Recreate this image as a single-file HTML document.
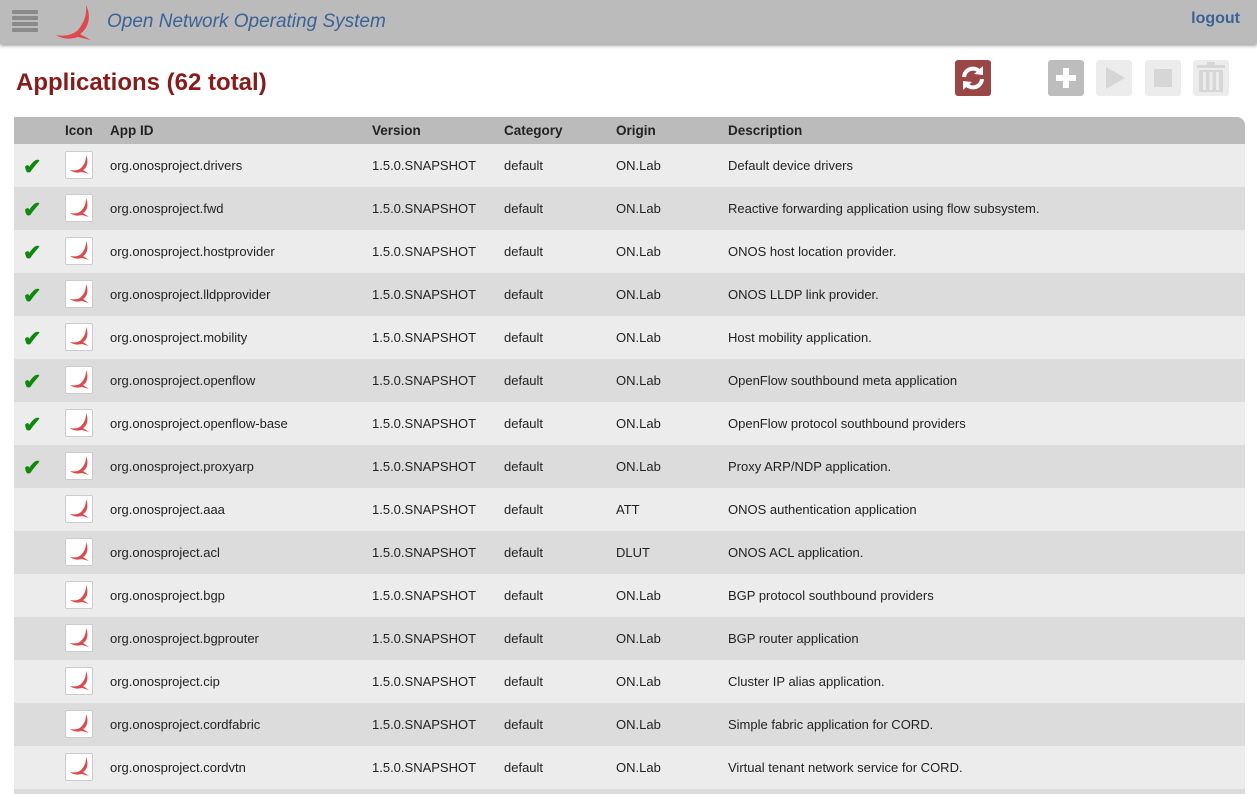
<!DOCTYPE html>
<html style="overflow:hidden;height:794px"><head><meta charset="utf-8"><style>
*{margin:0;padding:0;box-sizing:border-box}
body{width:1257px;height:794px;overflow:hidden;background:#fff;font-family:"Liberation Sans",Arial,sans-serif;position:relative}
.mast{position:absolute;left:0;top:0;width:1257px;height:44px;background:#bbb;box-shadow:0 2px 3px rgba(0,0,0,.35)}
.mast .title{position:absolute;left:107px;top:11px;font-size:19px;font-style:italic;color:#3c6296}
.mast .logout{position:absolute;right:17px;top:10px;font-size:16px;font-weight:bold;color:#3c6296}
.burger{position:absolute;left:12px;top:10px;width:26px}
.burger div{height:4px;background:#8a8a8a;margin-bottom:2px;border-radius:1px}
h1{position:absolute;left:16px;top:69px;font-size:24px;color:#8b1a1a;font-weight:bold}
.btn{position:absolute;top:60px;width:36px;height:36px;border-radius:3px}
.tbl{position:absolute;left:14px;top:117px;width:1231px;height:677px;overflow:hidden}
.hdr{height:27px;background:#bbb;border-radius:0 8px 0 0;position:relative;font-size:13.5px;font-weight:bold;color:#222}
.hdr span,.row span{position:absolute;top:6px}
.row{height:43px;position:relative;font-size:13px;color:#222}
.row span{top:14px}
.row:nth-child(odd){background:#ececec}
.row:nth-child(even){background:#dcdcdc}
.chk{position:absolute;left:9px;top:10px;color:#0b8a0b;font-size:22px;font-weight:bold}
.ic{position:absolute;left:51px;top:7px;width:28px;height:28px;background:#fff;border:1px solid #ccc;border-radius:2px}
</style></head><body>
<div class="mast">
<div class="burger"><div></div><div></div><div></div><div></div></div>
<svg style="position:absolute;left:50px;top:3px" width="45" height="38" viewBox="0 0 45 38"><path d="M36 2 C42 14 38 26 30 31 L41 37 L28 34 C22 36 14 37 6 32 C16 34 24 31 28 27 C34 20 37 12 36 2Z" fill="#e0484c"/></svg>
<div class="title">Open Network Operating System</div>
<div class="logout">logout</div>
</div>
<h1>Applications (62 total)</h1>
<div class="btn" style="left:955px;background:#9b4646"><svg width="36" height="36" viewBox="0 0 36 36"><path d="M9 17 A9 9 0 0 1 25 12" stroke="#fff" stroke-width="4" fill="none"/><path d="M28 6 L28 15 L19 14Z" fill="#fff"/><path d="M27 19 A9 9 0 0 1 11 24" stroke="#fff" stroke-width="4" fill="none"/><path d="M8 30 L8 21 L17 22Z" fill="#fff"/></svg></div>
<div class="btn" style="left:1048px;background:#bdbdbd"><svg width="36" height="36"><path d="M15 8h6v7h7v6h-7v7h-6v-7h-7v-6h7z" fill="#fff"/></svg></div>
<div class="btn" style="left:1096px;background:#ececec"><svg width="36" height="36"><path d="M10 7 L29 18 L10 29Z" fill="#d6d6d6"/></svg></div>
<div class="btn" style="left:1145px;background:#ececec"><svg width="36" height="36"><rect x="9" y="9" width="18" height="18" fill="#d6d6d6"/></svg></div>
<div class="btn" style="left:1193px;background:#ececec"><svg width="36" height="36"><rect x="4" y="5" width="28" height="3" fill="#d6d6d6"/><rect x="14" y="2" width="8" height="3" fill="#d6d6d6"/><path d="M6 10h24v22H6z M10 12v18h3V12z M16.5 12v18h3V12z M23 12v18h3V12z" fill="#d6d6d6" fill-rule="evenodd"/></svg></div>
<div class="tbl">
<div class="hdr"><span style="left:51px">Icon</span><span style="left:96px">App ID</span><span style="left:358px">Version</span><span style="left:490px">Category</span><span style="left:602px">Origin</span><span style="left:714px">Description</span></div>
<div id="rows"></div>
</div>
<script>
var d=[[1,"drivers","ON.Lab","Default device drivers"],[1,"fwd","ON.Lab","Reactive forwarding application using flow subsystem."],[1,"hostprovider","ON.Lab","ONOS host location provider."],[1,"lldpprovider","ON.Lab","ONOS LLDP link provider."],[1,"mobility","ON.Lab","Host mobility application."],[1,"openflow","ON.Lab","OpenFlow southbound meta application"],[1,"openflow-base","ON.Lab","OpenFlow protocol southbound providers"],[1,"proxyarp","ON.Lab","Proxy ARP/NDP application."],[0,"aaa","ATT","ONOS authentication application"],[0,"acl","DLUT","ONOS ACL application."],[0,"bgp","ON.Lab","BGP protocol southbound providers"],[0,"bgprouter","ON.Lab","BGP router application"],[0,"cip","ON.Lab","Cluster IP alias application."],[0,"cordfabric","ON.Lab","Simple fabric application for CORD."],[0,"cordvtn","ON.Lab","Virtual tenant network service for CORD."],[0,"","",""]];
var h="";d.forEach(function(r){h+='<div class="row">'+(r[0]?'<div class="chk">&#10004;</div>':'')+(r[1]?'<div class="ic"><svg width="26" height="26" viewBox="0 0 26 26"><path d="M20 3 C23 10 21 16 17 18 L23 22 L16 20 C12 21 8 21 4 18 C9 19 13 18 15 16 C19 12 20 8 20 3Z" fill="#e0484c"/></svg></div><span style="left:96px">org.onosproject.'+r[1]+'</span><span style="left:358px">1.5.0.SNAPSHOT</span><span style="left:490px">default</span><span style="left:602px">'+r[2]+'</span><span style="left:714px">'+r[3]+'</span>':'')+'</div>';});
document.getElementById("rows").innerHTML=h;
</script>
</body></html>
